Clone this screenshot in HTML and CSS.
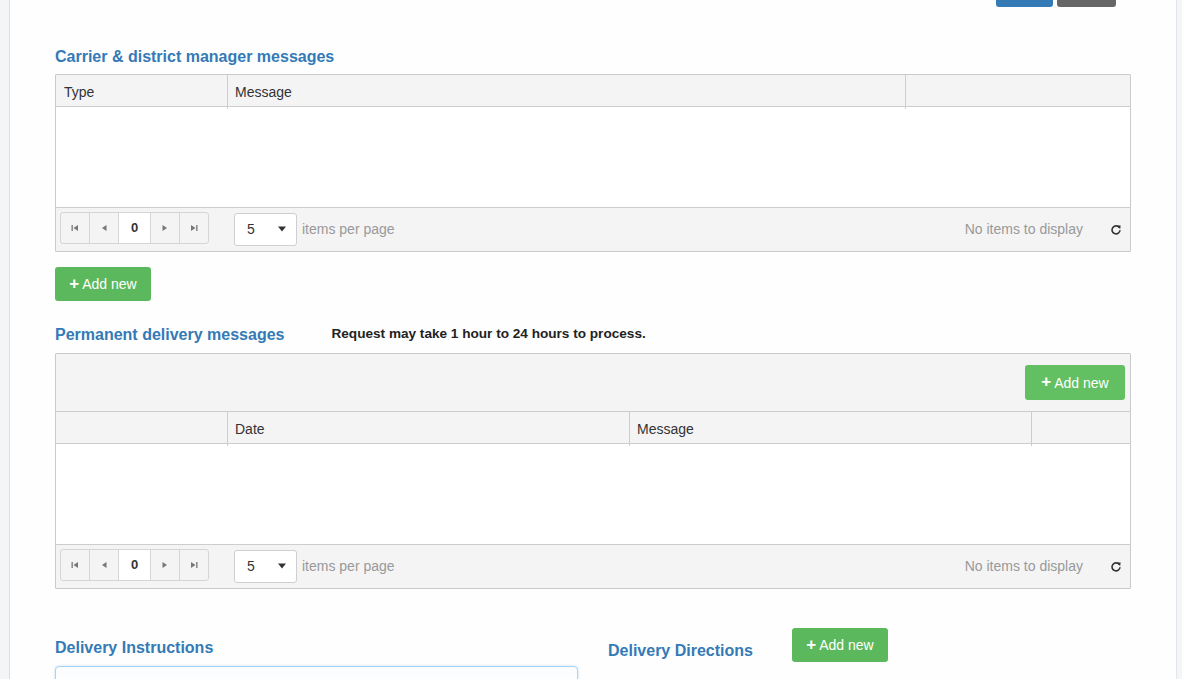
FILE: index.html
```html
<!DOCTYPE html>
<html>
<head>
<meta charset="utf-8">
<link rel="stylesheet" href="styles.css">
</head>
<body>
<div class="page">
  <div class="topbar">
    <button class="btn btn-blue" aria-label="Save"></button>
    <button class="btn btn-gray" aria-label="Cancel"></button>
  </div>

  <h3 class="section-title first">Carrier &amp; district manager messages</h3>
  <div class="grid">
    <div class="grid-head cols-3">
      <div class="th">Type</div>
      <div class="th">Message</div>
      <div class="th"></div>
    </div>
    <div class="grid-body"></div>
    <div class="pager">
      <div class="pager-nav">
        <span class="pbtn"><svg width="8" height="8" viewBox="0 0 8 8"><rect x="0.5" y="1" width="1.3" height="6" fill="#777"/><path d="M7 1 L2.5 4 L7 7 Z" fill="#777"/></svg></span>
        <span class="pbtn"><svg width="6" height="8" viewBox="0 0 6 8"><path d="M5.5 1 L1 4 L5.5 7 Z" fill="#777"/></svg></span>
        <span class="pbtn pnum">0</span>
        <span class="pbtn"><svg width="6" height="8" viewBox="0 0 6 8"><path d="M0.5 1 L5 4 L0.5 7 Z" fill="#777"/></svg></span>
        <span class="pbtn"><svg width="8" height="8" viewBox="0 0 8 8"><path d="M1 1 L5.5 4 L1 7 Z" fill="#777"/><rect x="6.2" y="1" width="1.3" height="6" fill="#777"/></svg></span>
      </div>
      <div class="psize"><span>5</span><svg width="8" height="6" viewBox="0 0 8 6"><path d="M0 0.5 L8 0.5 L4 5.5 Z" fill="#333"/></svg></div>
      <span class="pinfo">items per page</span>
      <span class="pempty">No items to display</span>
      <span class="prefresh"><svg width="12" height="12" viewBox="0 0 12 12"><path d="M9.3 3.6 A4 4 0 1 0 10 6.2" fill="none" stroke="#333" stroke-width="1.6"/><path d="M7 1.4 L10.6 1.6 L10.2 5.2 Z" fill="#333"/></svg></span>
    </div>
  </div>

  <button class="btn btn-green add-below"><span class="plus">+</span> Add new</button>

  <div class="title-row">
    <h3 class="section-title">Permanent delivery messages</h3>
    <span class="note">Request may take 1 hour to 24 hours to process.</span>
  </div>
  <div class="grid">
    <div class="grid-toolbar">
      <button class="btn btn-green btn-wide"><span class="plus">+</span> Add new</button>
    </div>
    <div class="grid-head cols-4">
      <div class="th"></div>
      <div class="th">Date</div>
      <div class="th">Message</div>
      <div class="th"></div>
    </div>
    <div class="grid-body"></div>
    <div class="pager">
      <div class="pager-nav">
        <span class="pbtn"><svg width="8" height="8" viewBox="0 0 8 8"><rect x="0.5" y="1" width="1.3" height="6" fill="#777"/><path d="M7 1 L2.5 4 L7 7 Z" fill="#777"/></svg></span>
        <span class="pbtn"><svg width="6" height="8" viewBox="0 0 6 8"><path d="M5.5 1 L1 4 L5.5 7 Z" fill="#777"/></svg></span>
        <span class="pbtn pnum">0</span>
        <span class="pbtn"><svg width="6" height="8" viewBox="0 0 6 8"><path d="M0.5 1 L5 4 L0.5 7 Z" fill="#777"/></svg></span>
        <span class="pbtn"><svg width="8" height="8" viewBox="0 0 8 8"><path d="M1 1 L5.5 4 L1 7 Z" fill="#777"/><rect x="6.2" y="1" width="1.3" height="6" fill="#777"/></svg></span>
      </div>
      <div class="psize"><span>5</span><svg width="8" height="6" viewBox="0 0 8 6"><path d="M0 0.5 L8 0.5 L4 5.5 Z" fill="#333"/></svg></div>
      <span class="pinfo">items per page</span>
      <span class="pempty">No items to display</span>
      <span class="prefresh"><svg width="12" height="12" viewBox="0 0 12 12"><path d="M9.3 3.6 A4 4 0 1 0 10 6.2" fill="none" stroke="#333" stroke-width="1.6"/><path d="M7 1.4 L10.6 1.6 L10.2 5.2 Z" fill="#333"/></svg></span>
    </div>
  </div>

  <div class="bottom">
    <div class="col">
      <h3 class="section-title instr">Delivery Instructions</h3>
      <div class="instr-box"></div>
    </div>
    <div class="col dir-row">
      <h3 class="section-title dir">Delivery Directions</h3>
      <button class="btn btn-green"><span class="plus">+</span> Add new</button>
    </div>
  </div>
</div>
</body>
</html>
```

FILE: styles.css
```css
html, body {
  margin: 0;
  padding: 0;
  height: 100%;
  overflow: hidden;
}
body {
  background: #f4f5f7;
  font-family: "Liberation Sans", Arial, sans-serif;
  color: #333;
  font-size: 13px;
}
.page {
  margin-left: 9px;
  min-height: 100%;
  background: #fefefe;
  border-left: 1px solid #dcdde2;
  border-right: 1px solid #e3e5ec;
  padding: 0 45px;
  box-sizing: content-box;
  width: 1076px;
}
.topbar {
  height: 7px;
  overflow: hidden;
  display: flex;
  justify-content: flex-end;
  align-items: flex-end;
  gap: 4px;
  padding-right: 15px;
}
.btn {
  font-family: "Liberation Sans", Arial, sans-serif;
  font-size: 14px;
  border: none;
  border-radius: 3px;
  color: #fff;
  height: 34px;
  padding: 0;
  cursor: pointer;
  flex: none;
}
.btn-blue { background: #337ab7; width: 57px; }
.btn-gray { background: #666; width: 59px; }
.btn-green {
  background: #5cb85c;
  width: 96px;
  display: inline-flex;
  align-items: center;
  justify-content: center;
  gap: 3px;
}
.plus {
  font-weight: bold;
  font-size: 17px;
  line-height: 1;
  margin-top: -2px;
}
.btn-wide { width: 100px; height: 35px; background: #62bf62; }
.section-title {
  margin: 0;
  color: #337ab7;
  font-size: 16px;
  font-weight: bold;
  line-height: 20px;
}
.section-title.first { margin-top: 40px; margin-bottom: 7px; }
.grid {
  border: 1px solid #c9cacd;
  border-radius: 1px;
}
.grid-head {
  display: grid;
  background: #f4f4f5;
  border-bottom: 1px solid #cdcdd0;
  height: 31px;
}
.cols-3 { grid-template-columns: 171px 678px 1fr; }
.cols-4 { grid-template-columns: 171px 402px 402px 1fr; }
.th {
  border-left: 1px solid #cdcdd0;
  padding: 0 7px;
  line-height: 34px;
  font-size: 14px;
  color: #333;
}
.th:first-child { border-left: none; padding-left: 8px; }
.grid-body {
  height: 100px;
  background: #fff;
}
.pager {
  background: #f4f4f5;
  border-top: 1px solid #cdcdd0;
  height: 43px;
  display: flex;
  align-items: center;
  padding: 0 4px;
}
.pager-nav {
  display: flex;
  border: 1px solid #d5d5d8;
  border-radius: 3px;
  height: 30px;
  margin-top: -3px;
}
.pbtn {
  width: 28px;
  display: flex;
  align-items: center;
  justify-content: center;
  border-left: 1px solid #d5d5d8;
}
.pbtn:first-child { border-left: none; width: 28px; }
.pnum {
  background: #fff;
  width: 32px;
  font-weight: bold;
  font-size: 13px;
  align-items: flex-start;
  padding-top: 7px;
  box-sizing: border-box;
}
.psize {
  margin-left: 25px;
  background: #fff;
  border: 1px solid #cfcfd2;
  border-radius: 3px;
  display: flex;
  align-items: center;
  justify-content: space-between;
  padding: 0 10px 0 12px;
  box-sizing: border-box;
  width: 63px;
  height: 33px;
  font-size: 14px;
  color: #333;
  margin-top: -1px;
}
.pinfo {
  margin-left: 5px;
  color: #999;
  font-size: 14px;
  margin-top: -2px;
}
.pempty {
  margin-left: auto;
  color: #999;
  font-size: 14px;
  margin-top: -2px;
}
.prefresh {
  margin-left: 27px;
  margin-right: 4px;
  display: flex;
}
.add-below { margin-top: 15px; }
.title-row {
  display: flex;
  align-items: center;
  margin-top: 24px;
  margin-bottom: 8px;
}
.note {
  margin-left: 47px;
  font-size: 13.6px;
  font-weight: bold;
  color: #222;
  margin-top: -3px;
}
.grid-toolbar {
  background: #f4f4f5;
  border-bottom: 1px solid #cdcdd0;
  height: 57px;
  display: flex;
  align-items: center;
  justify-content: flex-end;
  padding-right: 5px;
}
.bottom {
  display: grid;
  grid-template-columns: 523px 523px;
  gap: 30px;
  margin-top: 39px;
}
.instr { margin-top: 10px; margin-bottom: 8px; }
.instr-box {
  height: 60px;
  border: 1px solid #a8d3f3;
  border-radius: 4px;
  background: #fbfdff;
  box-shadow: 0 0 3px rgba(102, 175, 233, 0.35);
}
.dir-row {
  display: flex;
  align-items: flex-start;
  gap: 39px;
}
.dir { margin-top: 13px; }
```
